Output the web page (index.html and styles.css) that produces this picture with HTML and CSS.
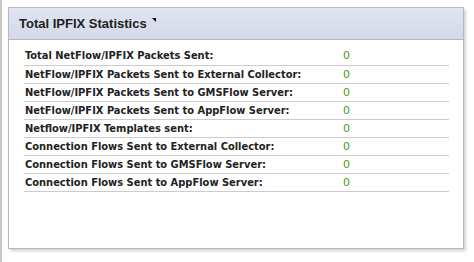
FILE: index.html
```html
<!DOCTYPE html>
<html>
<head>
<meta charset="utf-8">
<link rel="stylesheet" href="styles.css">
</head>
<body>
<div class="frame">
  <div class="panel">
    <div class="panel-head">
      <span class="title">Total IPFIX Statistics</span>
      <svg class="corner" width="4" height="4" viewBox="0 0 4 4"><polygon points="0,0 4,0 4,4" fill="#000"/></svg>
    </div>
    <div class="panel-body">
      <table class="stats">
        <tr><td class="label">Total NetFlow/IPFIX Packets Sent:</td><td class="val">0</td></tr>
        <tr><td class="label">NetFlow/IPFIX Packets Sent to External Collector:</td><td class="val">0</td></tr>
        <tr><td class="label">NetFlow/IPFIX Packets Sent to GMSFlow Server:</td><td class="val">0</td></tr>
        <tr><td class="label">NetFlow/IPFIX Packets Sent to AppFlow Server:</td><td class="val">0</td></tr>
        <tr><td class="label">Netflow/IPFIX Templates sent:</td><td class="val">0</td></tr>
        <tr><td class="label">Connection Flows Sent to External Collector:</td><td class="val">0</td></tr>
        <tr><td class="label">Connection Flows Sent to GMSFlow Server:</td><td class="val">0</td></tr>
        <tr><td class="label">Connection Flows Sent to AppFlow Server:</td><td class="val">0</td></tr>
      </table>
    </div>
  </div>
</div>
</body>
</html>
```
FILE: styles.css
```css
html, body { margin: 0; padding: 0; background: #fff; }
.frame {
  border-left: 2px solid #c8c8c8;
  height: 262px;
  box-sizing: border-box;
  padding: 7px 0 0 6px;
}
.panel {
  width: 456px;
  height: 242px;
  box-sizing: border-box;
  border: 1px solid #b8b8b8;
  box-shadow: 2px 2px 3px rgba(0,0,0,0.18);
  background: #fff;
}
.panel-head {
  height: 32px;
  box-sizing: border-box;
  border-bottom: 1px solid #b8b8b8;
  background: linear-gradient(#e0e4ef, #d4daea);
  display: flex;
  align-items: center;
  padding-left: 10px;
  font-family: "Liberation Sans", Arial, sans-serif;
  font-weight: bold;
  font-size: 13px;
  color: #222;
}
.corner { align-self: flex-start; margin-top: 10px; margin-left: 5px; }
.panel-body { padding: 7px 14px 0 15px; }
.stats {
  width: 100%;
  border-collapse: collapse;
  font-family: "DejaVu Sans Condensed", "DejaVu Sans", sans-serif;
  font-size: 11px;
}
.stats td {
  height: 18px;
  padding: 0 1px;
  border-bottom: 1px solid #cccccc;
  box-sizing: border-box;
  vertical-align: middle;
}
.label { width: 318px; font-weight: bold; color: #222; }
.val { color: #4c9a12; font-family: "DejaVu Sans", sans-serif; }
```
